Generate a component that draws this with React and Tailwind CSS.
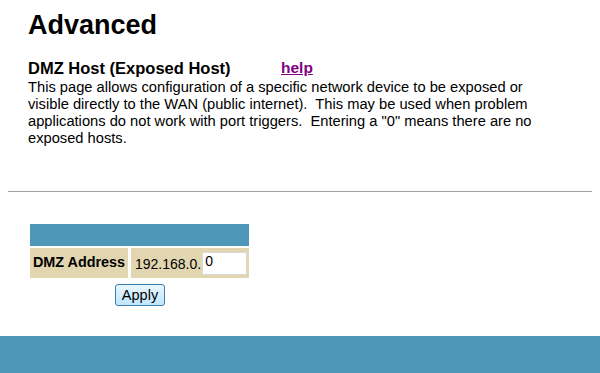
import React, { useState } from 'react';

const App = () => {
  const [host, setHost] = useState('0');

  return (
    <div className="w-[600px] h-[373px] bg-white flex flex-col font-['Liberation_Sans',Arial,sans-serif] text-black overflow-hidden">
      <div className="pl-[28px] pr-[8px]">
        <h1 className="text-[27px] font-bold leading-[32px] mt-[9px]">Advanced</h1>

        {/* Section title + help link */}
        <div className="flex items-end mt-[18px] h-[18px]">
          <span className="w-[253px] text-[16.5px] font-bold leading-[18px]">DMZ Host (Exposed Host)</span>
          <a href="#" className="text-[15.5px] font-bold leading-[18px] text-[#800080] underline">help</a>
        </div>

        <p className="text-[14.7px] leading-[17px] w-[508px] mt-[2px]">
          This page allows configuration of a specific network device to be exposed or visible directly to the WAN (public internet).&nbsp; This may be used when problem applications do not work with port triggers.&nbsp; Entering a "0" means there are no exposed hosts.
        </p>
      </div>

      <div className="mx-[8px] mt-[44px] border-t border-[#a0a0a0]" />

      {/* DMZ table */}
      <div className="ml-[30px] mt-[32px] w-[219px] flex flex-col">
        <div className="h-[22px] bg-[#4f97b8]" />
        <div className="mt-[2px] flex h-[30px]">
          <div className="w-[98px] bg-[#e2d6b0] flex items-center justify-center text-[14.4px] font-bold">DMZ Address</div>
          <div className="ml-[3px] flex-1 bg-[#e2d6b0] flex items-center pl-[4px] text-[14px]">
            <span className="mt-[3px]">192.168.0.</span>
            <input
              value={host}
              onChange={(e) => setHost(e.target.value)}
              className="ml-[1px] w-[45px] h-[23px] bg-white border border-[#d9d9d9] px-[2px] text-[14px] leading-[16px] pb-[5px] outline-none"
            />
          </div>
        </div>
        <div className="flex justify-center mt-[6px]">
          <button className="ml-[1px] w-[50px] h-[22px] rounded-[3px] border border-[#3c7fb1] bg-gradient-to-b from-[#eaf6fd] to-[#bee6fd] text-[14.5px] leading-[18px]">
            Apply
          </button>
        </div>
      </div>

      <div className="mt-auto h-[37px] bg-[#4f97b8]" />
    </div>
  );
};

export default App;
